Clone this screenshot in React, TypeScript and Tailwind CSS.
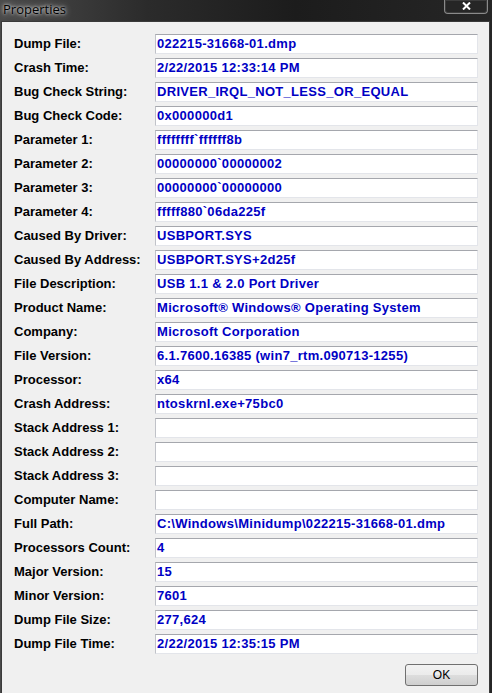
import type { ReactNode } from 'react';

// Crash dump "Properties" dialog (Windows 7 style).
const ROWS: ReadonlyArray<readonly [string, string]> = [
  ['Dump File:', '022215-31668-01.dmp'],
  ['Crash Time:', '2/22/2015 12:33:14 PM'],
  ['Bug Check String:', 'DRIVER_IRQL_NOT_LESS_OR_EQUAL'],
  ['Bug Check Code:', '0x000000d1'],
  ['Parameter 1:', 'ffffffff`ffffff8b'],
  ['Parameter 2:', '00000000`00000002'],
  ['Parameter 3:', '00000000`00000000'],
  ['Parameter 4:', 'fffff880`06da225f'],
  ['Caused By Driver:', 'USBPORT.SYS'],
  ['Caused By Address:', 'USBPORT.SYS+2d25f'],
  ['File Description:', 'USB 1.1 & 2.0 Port Driver'],
  ['Product Name:', 'Microsoft® Windows® Operating System'],
  ['Company:', 'Microsoft Corporation'],
  ['File Version:', '6.1.7600.16385 (win7_rtm.090713-1255)'],
  ['Processor:', 'x64'],
  ['Crash Address:', 'ntoskrnl.exe+75bc0'],
  ['Stack Address 1:', ''],
  ['Stack Address 2:', ''],
  ['Stack Address 3:', ''],
  ['Computer Name:', ''],
  ['Full Path:', 'C:\\Windows\\Minidump\\022215-31668-01.dmp'],
  ['Processors Count:', '4'],
  ['Major Version:', '15'],
  ['Minor Version:', '7601'],
  ['Dump File Size:', '277,624'],
  ['Dump File Time:', '2/22/2015 12:35:15 PM'],
];

function Field({ label, value }: { readonly label: string; readonly value: string }): ReactNode {
  return (
    <div className="flex h-[20px] items-center">
      <div className="w-[141px] shrink-0 text-[13px] font-bold text-black">{label}</div>
      <div className="flex h-[20px] w-[323px] items-center border border-t-[#a5a7ad] border-l-[#c0c2c8] border-r-[#e3e5ea] border-b-[#e3e5ea] bg-white pl-[1px] text-[13px] font-bold tracking-[0.3px] text-[#0000c4]">
        {value}
      </div>
    </div>
  );
}

export default function App(): ReactNode {
  return (
    <div
      className="flex h-[693px] w-[492px] flex-col overflow-hidden bg-[linear-gradient(90deg,#4a4a4a_0%,#2b2b2b_30%,#1c1c1c_60%,#262626_100%)]"
      style={{ fontFamily: '"Liberation Sans", Arial, sans-serif' }}
    >
      <div className="relative h-[21px] shrink-0">
        <span
          className="absolute left-[3px] top-[1px] text-[13px] leading-[17px] text-black [text-shadow:0_0_6px_#d8d8d8,0_0_3px_#e8e8e8]"
          style={{ fontFamily: '"Open Sans", "Liberation Sans", sans-serif' }}
        >
          Properties
        </span>
        <div className="absolute right-[4px] top-0 flex h-[14px] w-[44px] items-center justify-center rounded-b-[4px] border border-t-0 border-[#8a8a8a] bg-[#262626] shadow-[inset_0_0_0_1px_#3c3c3c]">
          <svg width="9" height="8" viewBox="0 0 9 8" className="-mt-[1px]">
            <path d="M1 0.5 L8 7.5 M8 0.5 L1 7.5" stroke="#ffffff" strokeWidth="2" />
          </svg>
        </div>
      </div>
      <div className="ml-[1px] mr-[2px] flex flex-1 flex-col border border-b-0 border-[#3a3a3a] bg-[#f0f0f0] pl-[12px] pt-[12px]">
        <div className="flex flex-col gap-[4px]">
          {ROWS.map(([label, value]) => (
            <Field key={label} label={label} value={value} />
          ))}
        </div>
        <div className="mt-[10px] flex w-[464px] justify-end">
          <button
            type="button"
            className="h-[22px] w-[73px] rounded-[3px] border border-[#707070] bg-[linear-gradient(180deg,#f2f2f2_0%,#ebebeb_50%,#dddddd_51%,#cfcfcf_100%)] text-[12px] text-black"
          >
            OK
          </button>
        </div>
      </div>
    </div>
  );
}
